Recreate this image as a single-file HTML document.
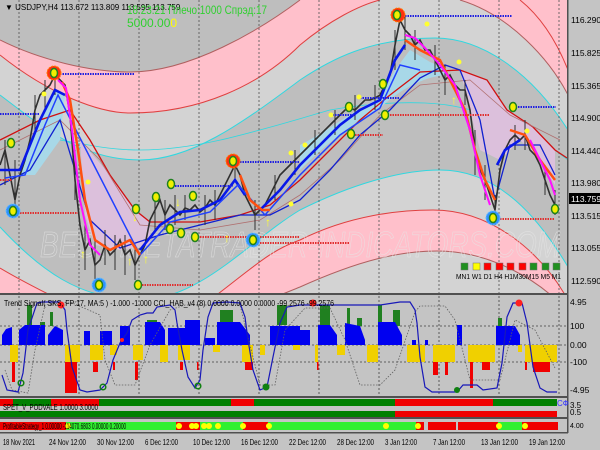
<!DOCTYPE html>
<html><head><meta charset="utf-8"><style>
body{margin:0;width:600px;height:450px;overflow:hidden;background:#c4c4c4;font-family:"Liberation Sans",sans-serif}
svg{display:block}
text{font-family:"Liberation Sans","Noto Sans CJK SC",sans-serif}
</style></head><body>
<svg width="600" height="450" viewBox="0 0 600 450" xmlns="http://www.w3.org/2000/svg">
<defs><clipPath id="mc"><rect x="0" y="0" width="567" height="294"/></clipPath>
<clipPath id="ic"><rect x="0" y="296" width="567" height="100"/></clipPath></defs>
<rect width="600" height="450" fill="#c4c4c4"/>
<g clip-path="url(#mc)">
<rect x="0" y="0" width="567" height="294" fill="#bebebe"/>
<path d="M0,55 C50,95 100,113 130,113 C200,113 260,85 300,45 C330,20 360,5 380,0 L470,0 C520,20 555,60 568,95 L568,130 C530,70 480,38 435,38 C370,38 330,60 300,80 C240,125 190,160 140,160 C80,160 40,125 0,95 Z" fill="#d3d3d3"/>
<path d="M0,40 C40,60 90,72 130,72 C190,72 260,30 300,0 L380,0 C360,5 330,20 300,45 C260,85 200,113 130,113 C100,113 50,95 0,55 Z" fill="#ffc0cb"/>
<path d="M0,40 C40,60 90,72 130,72 C190,72 260,30 300,0" fill="none" stroke="#b06060" stroke-width="1"/>
<path d="M0,55 C50,95 100,113 130,113 C200,113 260,85 300,45 C330,20 360,5 380,0" fill="none" stroke="#e04040" stroke-width="1"/>
<path d="M460,0 C510,15 550,60 568,95 L568,0 Z" fill="#ffc0cb"/>
<path d="M460,0 C510,15 550,60 568,95" fill="none" stroke="#b06060"/>
<path d="M520,0 C545,20 560,50 568,70" fill="none" stroke="#e04040"/>
<path d="M0,95 C40,125 80,160 140,160 C190,160 240,125 300,80 C330,60 370,38 435,38 C480,38 530,70 568,130" fill="none" stroke="#30d8e0"/>
<path d="M60,140 C90,145 110,150 140,150 C200,150 260,130 330,110 C370,103 400,102 425,103 C480,105 530,130 568,160" fill="none" stroke="#30d8e0" stroke-width="0.8"/>
<path d="M0,227 C40,270 80,300 140,300 C200,300 250,240 300,210 C350,185 400,170 440,170 C500,170 540,220 568,267 L568,300 L0,300 Z" fill="#d3d3d3"/>
<path d="M0,227 C40,270 80,300 140,300 C200,300 250,240 300,210 C350,185 400,170 440,170 C500,170 540,220 568,267" fill="none" stroke="#30d8e0"/>
<path d="M210,300 C250,270 270,250 300,240 C350,215 400,210 433,210 C490,210 540,250 568,300 L568,312 C540,280 490,251 437,251 C400,251 360,260 300,287 C280,295 270,300 260,300 Z" fill="#ffc0cb"/>
<path d="M210,300 C250,270 270,250 300,240 C350,215 400,210 433,210 C490,210 540,250 568,300" fill="none" stroke="#e04040"/>
<path d="M260,300 C270,300 280,295 300,287 C360,260 400,251 437,251 C490,251 540,280 568,312" fill="none" stroke="#b06060"/>
<path d="M0,268 C20,280 40,290 60,300 L0,300 Z" fill="#ffc0cb"/>
<path d="M0,268 C20,280 40,290 60,300" fill="none" stroke="#e04040"/>
<text x="40" y="257" font-size="36" font-style="italic" fill="none" stroke="#e6e6e6" stroke-width="0.6" opacity="0.8" textLength="520" lengthAdjust="spacingAndGlyphs">BEST-METATRADER-INDICATORS.COM</text>
<g stroke="#505050" stroke-dasharray="2,2" stroke-width="0.8">
<line x1="19" y1="0" x2="19" y2="294"/><line x1="79" y1="0" x2="79" y2="294"/><line x1="139" y1="0" x2="139" y2="294"/><line x1="199" y1="0" x2="199" y2="294"/><line x1="259" y1="0" x2="259" y2="294"/><line x1="319" y1="0" x2="319" y2="294"/><line x1="379" y1="0" x2="379" y2="294"/><line x1="439" y1="0" x2="439" y2="294"/><line x1="499" y1="0" x2="499" y2="294"/><line x1="559" y1="0" x2="559" y2="294"/>
</g>
<path d="M300,145 C330,130 350,112 380,98 L395,70 L410,50 L430,62 L445,68 L445,75 C420,78 400,90 380,108 C355,122 330,140 300,170 Z" fill="#a8d8e8"/>
<path d="M20,175 L40,120 L55,90 L65,95 L60,140 L35,175 Z" fill="#a8d8e8"/>
<path d="M80,140 L110,175 L135,210 L150,222 L150,245 L120,250 L95,245 L85,215 Z" fill="#dcc0dc"/>
<path d="M460,70 L487,80 L507,110 L533,127 L555,150 L555,185 L540,160 L520,140 L500,160 L480,150 Z" fill="#dcc0dc"/>
<polyline fill="none" stroke="#d01010" stroke-width="1.3" points="0,140 40,120 70,110 90,140 110,175 135,210 150,222 200,222 240,215 270,205 300,180 330,150 360,120 390,95 420,72 460,70 487,80 507,110 533,127 555,150 567,158"/>
<polyline fill="none" stroke="#b07070" stroke-width="0.8" points="0,150 60,120 100,160 140,225 200,230 260,220 300,195 340,160 380,115 420,85 470,80 510,115 560,140"/>
<polyline fill="none" stroke="#1020d0" stroke-width="1.3" points="0,185 30,170 60,120 90,220 120,248 160,235 200,225 240,215 270,215 300,200 330,170 360,135 390,110 420,78 445,65 460,70 480,120 495,200 510,145 540,145 555,175"/>
<polyline fill="none" stroke="#303030" stroke-width="1.6" points="0,165 5,150 10,175 15,200 20,175 25,160 30,140 35,110 40,95 45,90 50,85 55,75 60,80 65,85 70,115 75,180 80,225 85,250 90,240 95,265 100,260 105,245 110,255 115,250 120,240 125,255 130,250 135,265 140,255 145,245 150,220 155,210 160,200 165,215 170,205 175,210 180,215 185,208 190,210 195,205 200,212 205,208 210,200 215,205 220,195 225,185 230,175 235,165 240,175 245,195 250,205 255,215 260,210 265,205 270,195 275,185 280,175 285,170 290,165 295,160 300,155 305,150 310,145 315,140 320,135 325,130 330,125 335,120 340,115 345,110 350,108 355,110 360,105 365,100 370,100 375,98 380,95 385,85 390,75 395,45 400,20 405,30 410,35 415,45 420,40 425,50 430,50 435,60 440,70 445,80 450,75 455,85 460,90 465,90 470,110 475,150 480,170 485,180 490,195 495,210 500,170 505,150 510,140 515,135 520,140 525,135 530,150 535,155 540,165 545,180 550,195 555,205"/>
<g stroke="#303030" stroke-width="1">
<path d="M5,140V185M15,160V210M35,95V130M45,80V110M55,70V95M75,150V200M85,225V270M95,240V280M105,230V265M115,235V270M125,235V275M135,245V280M155,195V230M165,200V230M175,195V225M185,195V220M205,195V225M215,190V220M235,155V180M255,200V230M275,175V200M295,150V175M315,130V155M335,110V135M355,95V120M375,85V110M395,30V70M405,15V50M415,30V60M435,45V75M445,65V95M465,80V105M475,130V175M485,165V200M495,195V225M515,125V150M525,120V150M545,165V195M555,190V215"/>
</g>
<polyline fill="none" stroke="#0818e8" stroke-width="2.6" points="0,170 20,170 40,120 55,90 65,95"/>
<polyline fill="none" stroke="#0818e8" stroke-width="2.6" points="140,250 160,225 180,212 200,210 220,200 235,180 245,195"/>
<polyline fill="none" stroke="#0818e8" stroke-width="2.6" points="260,210 280,190 300,165 320,145 340,125 360,110 380,100 395,60 405,45"/>
<polyline fill="none" stroke="#0818e8" stroke-width="2.6" points="497,165 505,150 520,140"/>
<polyline fill="none" stroke="#2040ff" stroke-width="1.5" points="5,178 25,175 45,125 58,95 140,255 170,222 210,212 238,185 265,215 300,175 340,135 380,108 400,65 420,70"/>
<g fill="none" stroke-linejoin="round">
<polyline stroke="#ff5010" stroke-width="2.5" points="62,82 70,100 78,150 85,200 95,240 110,250 130,240 140,255"/>
<polyline stroke="#ff5010" stroke-width="2.5" points="240,175 250,200 262,210 270,210"/>
<polyline stroke="#ff5010" stroke-width="2.5" points="405,40 420,50 440,60 455,90 465,110 475,150 485,180 495,200"/>
<polyline stroke="#ff5010" stroke-width="2.5" points="510,130 525,135 540,160 555,180"/>
<polyline stroke="#ff10ff" stroke-width="2" points="58,80 66,88 72,130 80,200 90,245 100,255"/>
<polyline stroke="#ff10ff" stroke-width="2" points="405,35 415,38 425,48 440,65 455,85 470,130 480,175 490,205"/>
<polyline stroke="#ff10ff" stroke-width="2" points="530,140 540,160 550,180 555,195"/>
</g>
<g stroke-dasharray="1.5,1" stroke-width="2">
<line x1="55" y1="74" x2="134" y2="74" stroke="#2020e0"/>
<line x1="0" y1="114" x2="40" y2="114" stroke="#2020e0"/>
<line x1="405" y1="16" x2="512" y2="16" stroke="#2020e0"/>
<line x1="513" y1="107" x2="556" y2="107" stroke="#2020e0"/>
<line x1="235" y1="162" x2="300" y2="162" stroke="#2020e0"/>
<line x1="170" y1="186" x2="233" y2="186" stroke="#2020e0"/>
<line x1="360" y1="98" x2="400" y2="98" stroke="#2020e0"/>
<line x1="330" y1="115" x2="355" y2="115" stroke="#2020e0"/>
<line x1="15" y1="213" x2="78" y2="213" stroke="#e03030"/>
<line x1="0" y1="180" x2="12" y2="180" stroke="#e03030"/>
<line x1="137" y1="285" x2="193" y2="285" stroke="#e03030"/>
<line x1="200" y1="237" x2="300" y2="237" stroke="#e03030"/>
<line x1="255" y1="243" x2="350" y2="243" stroke="#e03030"/>
<line x1="385" y1="115" x2="490" y2="115" stroke="#e03030"/>
<line x1="350" y1="135" x2="383" y2="135" stroke="#e03030"/>
<line x1="495" y1="219" x2="555" y2="219" stroke="#e03030"/>
</g>
<g stroke-width="1">
<circle cx="54" cy="73" r="7" fill="#ff3010" stroke="#ff8000" stroke-dasharray="2,1"/>
<circle cx="233" cy="161" r="7" fill="#ff3010" stroke="#ff8000" stroke-dasharray="2,1"/>
<circle cx="398" cy="15" r="7" fill="#ff3010" stroke="#ff8000" stroke-dasharray="2,1"/>
<circle cx="13" cy="211" r="7" fill="#3090ff" stroke="#60c0ff" stroke-dasharray="2,1"/>
<circle cx="99" cy="285" r="7" fill="#3090ff" stroke="#60c0ff" stroke-dasharray="2,1"/>
<circle cx="253" cy="240" r="7" fill="#3090ff" stroke="#60c0ff" stroke-dasharray="2,1"/>
<circle cx="493" cy="218" r="7" fill="#3090ff" stroke="#60c0ff" stroke-dasharray="2,1"/>
</g>
<g fill="#f0f000" stroke="#208020" stroke-width="1.5">
<ellipse cx="54" cy="73" rx="3.5" ry="4.5"/><ellipse cx="233" cy="161" rx="3.5" ry="4.5"/><ellipse cx="397" cy="15" rx="3.5" ry="4.5"/>
<ellipse cx="13" cy="211" rx="3.5" ry="4.5"/><ellipse cx="99" cy="285" rx="3.5" ry="4.5"/><ellipse cx="253" cy="240" rx="3.5" ry="4.5"/><ellipse cx="493" cy="218" rx="3.5" ry="4.5"/>
<ellipse cx="11" cy="143" rx="3.5" ry="4.5"/><ellipse cx="136" cy="209" rx="3.5" ry="4.5"/><ellipse cx="138" cy="285" rx="3.5" ry="4.5"/><ellipse cx="156" cy="197" rx="3.5" ry="4.5"/><ellipse cx="171" cy="184" rx="3.5" ry="4.5"/><ellipse cx="193" cy="196" rx="3.5" ry="4.5"/><ellipse cx="170" cy="229" rx="3.5" ry="4.5"/><ellipse cx="181" cy="233" rx="3.5" ry="4.5"/><ellipse cx="195" cy="237" rx="3.5" ry="4.5"/>
<ellipse cx="349" cy="107" rx="3.5" ry="4.5"/><ellipse cx="383" cy="84" rx="3.5" ry="4.5"/><ellipse cx="385" cy="115" rx="3.5" ry="4.5"/><ellipse cx="351" cy="134" rx="3.5" ry="4.5"/><ellipse cx="513" cy="107" rx="3.5" ry="4.5"/><ellipse cx="555" cy="209" rx="3.5" ry="4.5"/>
</g>
<g fill="#ffff30">
<circle cx="44" cy="94" r="2.5"/><circle cx="88" cy="182" r="2.5"/><circle cx="291" cy="153" r="2.5"/><circle cx="331" cy="115" r="2.5"/><circle cx="359" cy="97" r="2.5"/><circle cx="427" cy="24" r="2.5"/><circle cx="459" cy="62" r="2.5"/><circle cx="527" cy="131" r="2.5"/><circle cx="305" cy="145" r="2.5"/><circle cx="291" cy="204" r="2.5"/>
</g>
<g fill="#ffff30" font-size="12" font-weight="bold">
<text x="80" y="258">↑</text><text x="127" y="265">↑</text><text x="143" y="263">↑</text><text x="224" y="242">↑</text><text x="265" y="226">↑</text><text x="451" y="104">↑</text><text x="175" y="206">↓</text><text x="132" y="221">↓</text>
</g>
<g stroke="#707070" stroke-width="0.5">
<rect x="461" y="263" width="7" height="7" fill="#209020"/><rect x="473" y="263" width="7" height="7" fill="#ffff00"/><rect x="484" y="263" width="7" height="7" fill="#ff0000"/><rect x="496" y="263" width="7" height="7" fill="#ff0000"/><rect x="507" y="263" width="7" height="7" fill="#ff0000"/><rect x="519" y="263" width="7" height="7" fill="#ff0000"/><rect x="530" y="263" width="7" height="7" fill="#209020"/><rect x="542" y="263" width="7" height="7" fill="#209020"/><rect x="553" y="263" width="7" height="7" fill="#209020"/>
</g>
<text x="456" y="279" font-size="7.5" fill="#000" textLength="105" lengthAdjust="spacingAndGlyphs">MN1 W1 D1 H4 H1M30M15 M5 M1</text>
<text x="5" y="10" font-size="8" fill="#000">▼ USDJPY,H4  113.672 113.809 113.595 113.759</text>
<text x="127" y="14" font-size="12" fill="#30d030" textLength="140" lengthAdjust="spacingAndGlyphs">18:23:21 Плечо:1000 Спрэд:17</text>
<text x="127" y="27" font-size="12" fill="#30d030">5000.00<tspan fill="#ffff00">0</tspan></text>
</g>
<rect x="0" y="293" width="568" height="2" fill="#505050"/>
<rect x="0" y="396" width="568" height="2" fill="#505050"/>
<rect x="0" y="417" width="568" height="2" fill="#505050"/>
<rect x="0" y="432" width="568" height="1.5" fill="#505050"/>
<rect x="567" y="0" width="1.5" height="433" fill="#505050"/>
<rect x="0" y="295" width="567" height="101" fill="#c4c4c4"/>
<g clip-path="url(#ic)">
<g stroke="#404040" stroke-dasharray="2,2" stroke-width="0.8">
<line x1="0" y1="326" x2="567" y2="326"/><line x1="0" y1="345" x2="567" y2="345"/><line x1="0" y1="362" x2="567" y2="362"/>
<line x1="19" y1="296" x2="19" y2="396"/><line x1="79" y1="296" x2="79" y2="396"/><line x1="139" y1="296" x2="139" y2="396"/><line x1="199" y1="296" x2="199" y2="396"/><line x1="259" y1="296" x2="259" y2="396"/><line x1="319" y1="296" x2="319" y2="396"/><line x1="379" y1="296" x2="379" y2="396"/><line x1="439" y1="296" x2="439" y2="396"/><line x1="499" y1="296" x2="499" y2="396"/><line x1="559" y1="296" x2="559" y2="396"/>
</g>
<g fill="#208020">
<rect x="27" y="305" width="5" height="20"/><rect x="40" y="322" width="5" height="4"/><rect x="50" y="312" width="3" height="14"/><rect x="147" y="320" width="10" height="4"/><rect x="220" y="310" width="13" height="14"/><rect x="277" y="305" width="10" height="20"/>
<rect x="320" y="305" width="10" height="22"/><rect x="347" y="308" width="3" height="18"/><rect x="357" y="318" width="5" height="8"/><rect x="378" y="305" width="4" height="20"/><rect x="393" y="310" width="7" height="16"/><rect x="498" y="318" width="4" height="8"/>
</g>
<g fill="#0000f0">
<path d="M2,345V335L6,329L12,327V345Z"/><path d="M19,345V330L25,325L45,325V345Z"/><path d="M48,345V335L55,326L63,330V345Z"/><path d="M84,345V331H90V345Z"/><path d="M100,345V331H112V345Z"/><path d="M120,345V326H130V345Z"/><path d="M145,345V322L160,322L165,330V345Z"/><path d="M168,345V328H185V345Z"/><path d="M185,345V320H200V345Z"/><path d="M205,345V338H215V345Z"/><path d="M217,345V322L240,322L250,335V345Z"/><path d="M270,345V326H300V345Z"/>
<path d="M300,345V330H310V345Z"/><path d="M318,345V325L330,325L337,335V345Z"/><path d="M345,345V323L360,326L365,340V345Z"/><path d="M378,345V322L395,322L402,335V345Z"/><path d="M412,345V340H416V345Z"/><path d="M425,345V340H428V345Z"/><path d="M457,345V325H462V345Z"/><path d="M496,345V326H515L520,335V345Z"/>
</g>
<g fill="#f0d000">
<path d="M10,345H18V362H10Z"/><path d="M65,345H80V362H65Z"/><path d="M90,345H103V360H90Z"/><path d="M110,345H117V355H110Z"/><path d="M133,345H143V360H133Z"/><path d="M160,345H168V362H160Z"/><path d="M178,345H190V360H178Z"/><path d="M213,345H220V352H213Z"/><path d="M242,345H253V362H242Z"/><path d="M260,345H265V355H260Z"/><path d="M293,345H300V350H293Z"/>
<path d="M315,345H318V362H315Z"/><path d="M337,345H345V355H337Z"/><path d="M367,345H378V362H367Z"/><path d="M407,345H425V362H407Z"/><path d="M433,345H455V362H433Z"/><path d="M468,345H495V362H468Z"/><path d="M518,345H522V352H518Z"/><path d="M525,345H557V362H525Z"/>
</g>
<g fill="#f00000">
<rect x="12" y="362" width="3" height="20"/><rect x="65" y="362" width="12" height="31"/><rect x="93" y="362" width="5" height="10"/><rect x="113" y="362" width="2" height="8"/><rect x="135" y="362" width="3" height="18"/><rect x="180" y="362" width="3" height="8"/><rect x="197" y="362" width="1.5" height="8"/><rect x="245" y="362" width="8" height="8"/>
<rect x="317" y="362" width="1.5" height="8"/><rect x="433" y="362" width="5" height="13"/><rect x="445" y="362" width="3" height="13"/><rect x="470" y="362" width="3" height="26"/><rect x="482" y="362" width="8" height="8"/><rect x="525" y="362" width="2" height="8"/><rect x="533" y="362" width="17" height="10"/>
</g>
<polyline fill="none" stroke="#606060" stroke-dasharray="1.5,1.5" stroke-width="0.8" points="5,370 12,390 28,393 35,350 45,305 70,302 100,315 105,360 115,385 135,385 150,345 170,310 185,305 240,305 250,345 260,385 275,385 285,330 305,308 330,308 345,340 360,385 380,385 395,370 415,312 420,306 445,306 455,320 470,380 500,380 515,320 535,330 555,368"/>
<polyline fill="none" stroke="#1818b8" stroke-width="1.2" points="2,375 7,390 18,392 23,373 28,330 37,303 42,302 60,302 65,310 67,330 72,367 80,390 87,392 100,390 107,383 113,360 120,343 127,333 132,320 140,315 147,313 153,313 157,307 170,305 175,310 177,323 182,350 188,377 195,388 200,380 203,350 208,317 213,303 227,302 240,303 245,317 248,340 253,370 260,390 267,387 273,357 280,323 287,307 300,305 310,305 320,305 330,305 340,305 350,305 360,305 380,305 400,302 410,302 415,310 417,323 420,357 425,387 432,392 457,392 463,385 477,385 483,390 497,388 502,363 507,317 513,303 522,303 527,323 533,367 540,388 547,392 557,392"/>
<circle cx="61" cy="305" r="3.5" fill="#ff2020"/><circle cx="313" cy="303" r="3.5" fill="#ff2020"/><circle cx="519" cy="303" r="3.5" fill="#ff2020"/><circle cx="122" cy="340" r="2" fill="#ff2020"/>
<circle cx="21" cy="383" r="2.8" fill="none" stroke="#108010" stroke-width="1.5"/><circle cx="103" cy="387" r="2.8" fill="none" stroke="#108010" stroke-width="1.5"/><circle cx="198" cy="386" r="2.8" fill="none" stroke="#108010" stroke-width="1.5"/><circle cx="266" cy="387" r="3.5" fill="#108010"/><circle cx="457" cy="390" r="3" fill="#108010"/>
<text x="4" y="306" font-size="8" fill="#000" textLength="330" lengthAdjust="spacingAndGlyphs">Trend Signal( SKS, FP:17, MA:5 ) -1.000 -1.000  CCI_HAB_v4 (8) 0.0000 0.0000 0.0000 -99.2576 -99.2576</text>
</g>
<rect x="0" y="399" width="13" height="7" fill="#f00000"/><rect x="13" y="399" width="38" height="7" fill="#008000"/><rect x="51" y="399" width="48" height="7" fill="#f00000"/><rect x="99" y="399" width="132" height="7" fill="#008000"/><rect x="231" y="399" width="23" height="7" fill="#f00000"/><rect x="254" y="399" width="141" height="7" fill="#008000"/><rect x="395" y="399" width="98" height="7" fill="#f00000"/><rect x="493" y="399" width="64" height="7" fill="#008000"/>
<rect x="0" y="411" width="395" height="6" fill="#008000"/><rect x="395" y="411" width="162" height="6" fill="#f00000"/>
<text x="3" y="410" font-size="8" fill="#000" textLength="95" lengthAdjust="spacingAndGlyphs">SPET_V_PODVALE 1.0000 3.0000</text>
<text x="557" y="406" font-size="8" fill="#3030ff">СФ</text>
<rect x="0" y="422" width="66" height="8" fill="#f00000"/><rect x="66" y="422" width="110" height="8" fill="#30f030"/><rect x="176" y="422" width="24" height="8" fill="#f00000"/><rect x="200" y="422" width="43" height="8" fill="#30f030"/><rect x="243" y="422" width="25" height="8" fill="#f00000"/><rect x="268" y="422" width="148" height="8" fill="#30f030"/><rect x="416" y="422" width="8" height="8" fill="#f00000"/><rect x="428" y="422" width="28" height="8" fill="#f00000"/><rect x="458" y="422" width="40" height="8" fill="#f00000"/><rect x="498" y="422" width="24" height="8" fill="#30f030"/><rect x="522" y="422" width="36" height="8" fill="#f00000"/>
<g fill="#ffff00"><circle cx="68" cy="426" r="3"/><circle cx="179" cy="426" r="3"/><circle cx="192" cy="426" r="3"/><circle cx="196" cy="426" r="3"/><circle cx="204" cy="426" r="3"/><circle cx="209" cy="426" r="3"/><circle cx="218" cy="426" r="3"/><circle cx="243" cy="426" r="3"/><circle cx="269" cy="426" r="3"/><circle cx="386" cy="426" r="3"/><circle cx="418" cy="426" r="3"/><circle cx="499" cy="426" r="3"/><circle cx="525" cy="426" r="3"/></g>
<text x="3" y="429" font-size="8" fill="#000" textLength="123" lengthAdjust="spacingAndGlyphs">ProfitableStrategy_1 0.00000 -114070.6803 0.00000 0.20000</text>
<g font-size="8.5" fill="#000">
<text x="571" y="23">116.290</text><text x="571" y="56">115.825</text><text x="571" y="89">115.365</text><text x="571" y="121">114.900</text><text x="571" y="154">114.440</text><text x="571" y="186">113.980</text><text x="571" y="219">113.515</text><text x="571" y="251">113.055</text><text x="571" y="284">112.590</text>
<text x="570" y="305">4.95</text><text x="570" y="329">100</text><text x="570" y="348">0.00</text><text x="570" y="365">-100</text><text x="570" y="393">-4.95</text>
<text x="570" y="408" font-size="8">3.5</text><text x="570" y="415" font-size="8">0.5</text><text x="570" y="428" font-size="7">4.00</text>
</g>
<rect x="569" y="193" width="31" height="11" fill="#000"/><text x="571" y="202" font-size="8.5" fill="#fff">113.759</text>
<g font-size="8.5" fill="#000">
<text x="3" y="445" textLength="32" lengthAdjust="spacingAndGlyphs">18 Nov 2021</text>
<text x="49" y="445" textLength="37" lengthAdjust="spacingAndGlyphs">24 Nov 12:00</text>
<text x="97" y="445" textLength="37" lengthAdjust="spacingAndGlyphs">30 Nov 12:00</text>
<text x="145" y="445" textLength="33" lengthAdjust="spacingAndGlyphs">6 Dec 12:00</text>
<text x="193" y="445" textLength="37" lengthAdjust="spacingAndGlyphs">10 Dec 12:00</text>
<text x="241" y="445" textLength="37" lengthAdjust="spacingAndGlyphs">16 Dec 12:00</text>
<text x="289" y="445" textLength="37" lengthAdjust="spacingAndGlyphs">22 Dec 12:00</text>
<text x="337" y="445" textLength="37" lengthAdjust="spacingAndGlyphs">28 Dec 12:00</text>
<text x="385" y="445" textLength="32" lengthAdjust="spacingAndGlyphs">3 Jan 12:00</text>
<text x="433" y="445" textLength="32" lengthAdjust="spacingAndGlyphs">7 Jan 12:00</text>
<text x="481" y="445" textLength="37" lengthAdjust="spacingAndGlyphs">13 Jan 12:00</text>
<text x="529" y="445" textLength="36" lengthAdjust="spacingAndGlyphs">19 Jan 12:00</text>
</g>
</svg>
</body></html>
